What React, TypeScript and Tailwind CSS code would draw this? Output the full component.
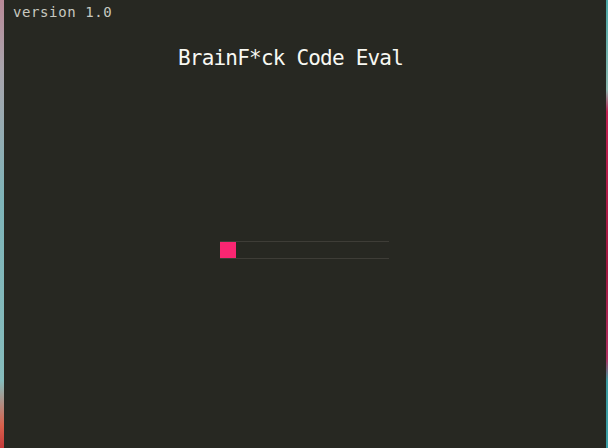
export default function App() {
  return (
    <div className="flex h-[448px] w-[608px] overflow-hidden bg-[#272822]">
      {/* wallpaper peeking out on the sides */}
      <div className="w-[4px] shrink-0 bg-[linear-gradient(to_bottom,#b98a98_0%,#a9a4ac_15%,#7eb4b8_45%,#86bcbc_85%,#d8604c_95%,#c43a3a_100%)]" />
      <div className="flex flex-1 flex-col bg-[#272822] font-['DejaVu_Sans_Mono',monospace]">
        <div className="pl-[9px] pt-[5px] text-[14px] leading-[14px] tracking-[0.6px] text-[#c8c8c0]">
          version 1.0
        </div>
        <h1 className="mt-[29px] pr-[29px] text-center text-[21px] leading-[21px] tracking-[-0.8px] text-[#f8f8f2]">
          BrainF*ck Code Eval
        </h1>
        <div className="mt-[172px] flex justify-center pr-[1px]">
          <div className="flex h-[18px] w-[169px] border-y border-[#3e3d37]">
            <div className="h-[16px] w-[16px] bg-[#f92672]" />
          </div>
        </div>
      </div>
      <div className="w-[2px] shrink-0 bg-[linear-gradient(to_bottom,#4aa8a8_0%,#8ab8b0_20%,#c02050_25%,#a01840_60%,#b03060_80%,#3a9aa0_85%,#3aa0a8_100%)]" />
    </div>
  );
}
